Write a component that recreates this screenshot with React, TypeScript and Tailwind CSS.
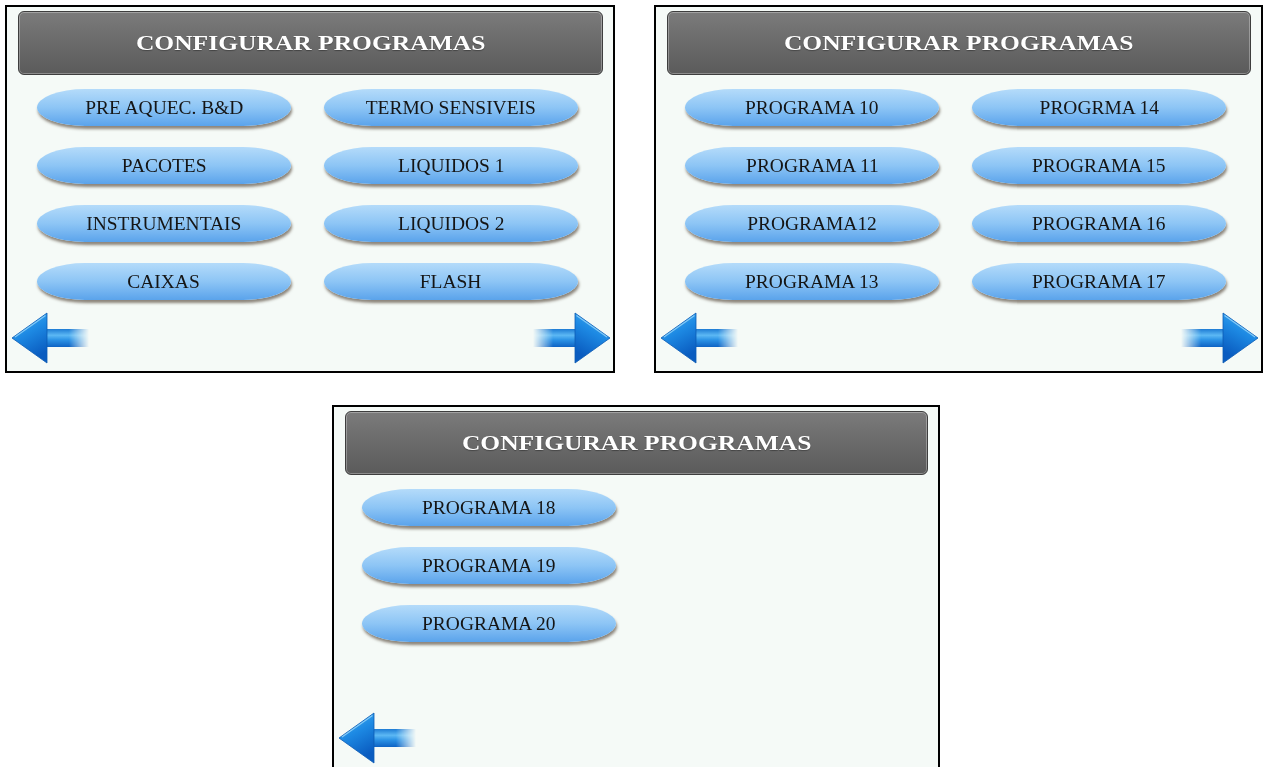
import { useId } from 'react';

const serif = { fontFamily: '"Liberation Serif", "Times New Roman", serif' };

/** Blue 3D arrow, drawn pointing left; `flip` mirrors it to point right. */
function Arrow({ flip = false }: { flip?: boolean }) {
  const id = useId().replace(/:/g, '');
  return (
    <svg width="78" height="52" viewBox="0 0 78 52" className={flip ? '-scale-x-100' : ''}>
      <defs>
        <linearGradient id={`shaft${id}`} x1="0" y1="0" x2="0" y2="1">
          <stop offset="0" stopColor="#1d7bd4" />
          <stop offset="0.35" stopColor="#5cb8f4" />
          <stop offset="0.6" stopColor="#2c93e6" />
          <stop offset="1" stopColor="#0e63c4" />
        </linearGradient>
        <linearGradient id={`fade${id}`} x1="0" y1="0" x2="1" y2="0">
          <stop offset="0" stopColor="#fff" />
          <stop offset="0.6" stopColor="#fff" />
          <stop offset="1" stopColor="#000" />
        </linearGradient>
        <mask id={`mask${id}`}>
          <rect x="28" y="0" width="50" height="52" fill={`url(#fade${id})`} />
        </mask>
        <linearGradient id={`head${id}`} x1="0" y1="0" x2="0.4" y2="1">
          <stop offset="0" stopColor="#4ab6f5" />
          <stop offset="0.5" stopColor="#1d89e3" />
          <stop offset="1" stopColor="#0a5cc0" />
        </linearGradient>
      </defs>
      <rect x="30" y="17" width="48" height="18" fill={`url(#shaft${id})`} mask={`url(#mask${id})`} />
      <polygon points="1,26 36,1 36,51" fill={`url(#head${id})`} stroke="#0b5bb4" strokeWidth="0.8" strokeLinejoin="round" />
      <polyline points="4,25 34.5,3.5" fill="none" stroke="#9ad8fb" strokeWidth="1.2" opacity="0.8" />
    </svg>
  );
}

function ProgramButton({ label }: { label: string }) {
  return (
    <div className="flex h-[37px] w-[254px] items-center justify-center rounded-[48px/18.5px] bg-gradient-to-b from-[#b4dbfa] via-[#8dc5f5] to-[#5aa3eb] shadow-[1px_3px_3px_rgba(70,55,40,0.6)]">
      <span className="inline-block scale-x-[1.08] text-[18px] leading-none text-[#151515]" style={serif}>
        {label}
      </span>
    </div>
  );
}

function Panel({
  items,
  next,
  width,
  btnLeft,
}: {
  items: string[];
  next: boolean;
  width: string;
  btnLeft: string;
}) {
  return (
    <div className={`flex h-[368px] shrink-0 flex-col border-2 border-black bg-[#f5faf7] ${width}`}>
      <div className="ml-[11px] mr-[10px] mt-[4px] flex h-[64px] items-center justify-center rounded-[6px] border border-[#3e3e3e] bg-gradient-to-b from-[#7b7b7b] via-[#6a6a6a] to-[#5b5b5b] shadow-[inset_0_0_0_1px_rgba(255,255,255,0.3)]">
        <span
          className="inline-block scale-x-[1.16] text-[22px] font-bold leading-none text-white [text-shadow:0_1px_1px_rgba(0,0,0,0.35)]"
          style={serif}
        >
          CONFIGURAR PROGRAMAS
        </span>
      </div>
      <div className={`mt-[14px] grid w-fit grid-flow-col grid-cols-2 grid-rows-4 gap-x-[33px] gap-y-[21px] ${btnLeft}`}>
        {items.map((label) => (
          <ProgramButton key={label} label={label} />
        ))}
      </div>
      <div className="mb-[7px] mt-auto flex items-center justify-between pl-[4px] pr-[2px]">
        <Arrow />
        {next && <Arrow flip />}
      </div>
    </div>
  );
}

export default function App() {
  return (
    <div className="min-h-screen bg-white pl-[5px] pt-[5px]">
      <div className="flex gap-[39px]">
        <Panel
          width="w-[610px]"
          btnLeft="ml-[30px]"
          next
          items={['PRE AQUEC. B&D', 'PACOTES', 'INSTRUMENTAIS', 'CAIXAS', 'TERMO SENSIVEIS', 'LIQUIDOS 1', 'LIQUIDOS 2', 'FLASH']}
        />
        <Panel
          width="w-[609px]"
          btnLeft="ml-[29px]"
          next
          items={['PROGRAMA 10', 'PROGRAMA 11', 'PROGRAMA12', 'PROGRAMA 13', 'PROGRMA 14', 'PROGRAMA 15', 'PROGRAMA 16', 'PROGRAMA 17']}
        />
      </div>
      <div className="mt-[32px] pl-[327px]">
        <Panel width="w-[608px]" btnLeft="ml-[28px]" next={false} items={['PROGRAMA 18', 'PROGRAMA 19', 'PROGRAMA 20']} />
      </div>
    </div>
  );
}
